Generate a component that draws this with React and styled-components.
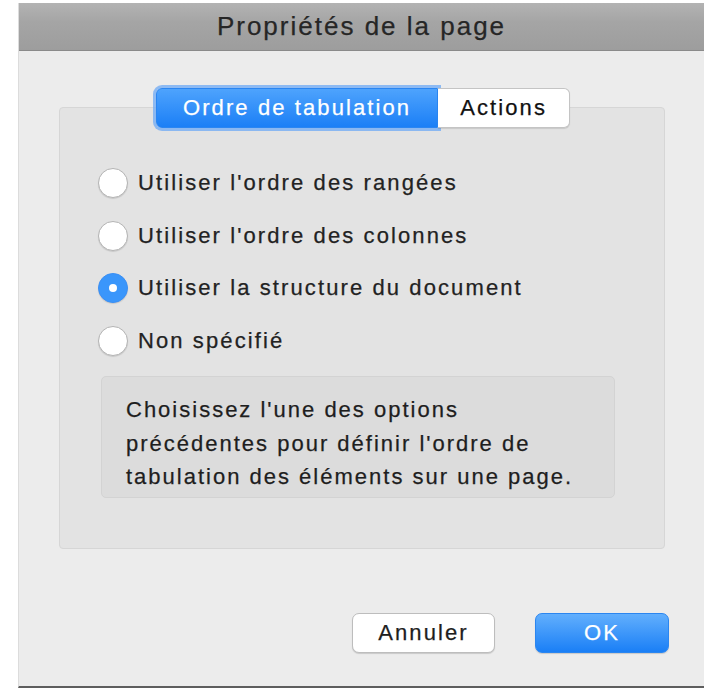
import React, { useState } from "react";
import styled, { createGlobalStyle } from "styled-components";

const Global = createGlobalStyle`
  html, body {
    margin: 0;
    padding: 0;
    background: #ffffff;
  }
  body {
    font-family: "Liberation Sans", Arial, sans-serif;
    -webkit-text-stroke: 0.25px currentColor;
  }
`;

const Page = styled.div`
  width: 710px;
  height: 695px;
  padding: 3px 6px 0 18px;
  box-sizing: border-box;
`;

const Window = styled.div`
  width: 686px;
  height: 685px;
  display: flex;
  flex-direction: column;
  background: #ececec;
  border-left: 1px solid #dcdcdc;
  border-bottom: 2px solid #5e5e5e;
  box-sizing: border-box;
`;

const TitleBar = styled.div`
  height: 47px;
  flex-shrink: 0;
  display: flex;
  align-items: center;
  justify-content: center;
  background: linear-gradient(#b3b3b3, #a5a5a5 40%, #9d9d9d);
  border-bottom: 1px solid #8a8a8a;
  color: #262626;
  font-size: 26px;
  letter-spacing: 2px;
`;

const Body = styled.div`
  flex: 1;
  display: flex;
  flex-direction: column;
  padding: 37px 39px 33px 40px;
`;

const Tabs = styled.div`
  display: flex;
  justify-content: center;
  margin-bottom: -21px;
  position: relative;
  z-index: 1;
  padding-left: 2px;
`;

const Tab = styled.div`
  height: 40px;
  display: flex;
  align-items: center;
  padding: 0 ${(p) => (p.$active ? "26px" : "22px")};
  font-size: 22px;
  letter-spacing: 2.1px;
  box-sizing: border-box;
  color: ${(p) => (p.$active ? "#ffffff" : "#111111")};
  background: ${(p) =>
    p.$active ? "linear-gradient(#4ea3fd, #1b7ff6)" : "#ffffff"};
  border: 1px solid ${(p) => (p.$active ? "#2a86f2" : "#c4c4c4")};
  border-radius: ${(p) => (p.$active ? "6px 0 0 6px" : "0 6px 6px 0")};
  box-shadow: ${(p) =>
    p.$active
      ? "0 0 0 3px rgba(110, 170, 245, 0.75)"
      : "0 1px 1px rgba(0,0,0,0.12)"};
  border-left: ${(p) => (p.$active ? "" : "none")};
`;

const Group = styled.div`
  background: #e3e3e3;
  border: 1px solid #d6d6d6;
  border-radius: 4px;
  padding: 49px 30px 50px 38px;
  display: flex;
  flex-direction: column;
`;

const Row = styled.label`
  height: 52.5px;
  display: flex;
  align-items: center;
  gap: 10px;
  font-size: 22px;
  letter-spacing: 2.1px;
  color: #222222;
  cursor: pointer;
  white-space: nowrap;
`;

const Radio = styled.span`
  width: 30px;
  height: 30px;
  flex-shrink: 0;
  border-radius: 50%;
  box-sizing: border-box;
  display: flex;
  align-items: center;
  justify-content: center;
  background: ${(p) => (p.$checked ? "#3a96fb" : "#ffffff")};
  border: 1px solid ${(p) => (p.$checked ? "#3a8ff5" : "#b4b4b4")};
  box-shadow: 0 1px 1px rgba(0, 0, 0, 0.12);

  &::after {
    content: "";
    display: ${(p) => (p.$checked ? "block" : "none")};
    width: 8px;
    height: 8px;
    border-radius: 50%;
    background: #ffffff;
  }
`;

const Info = styled.div`
  margin: 9px 0 0 3px;
  width: 514px;
  box-sizing: border-box;
  padding: 16px 10px 3px 24px;
  background: #dcdcdc;
  border: 1px solid #d3d3d3;
  border-radius: 5px;
  font-size: 22px;
  letter-spacing: 2px;
  line-height: 33.5px;
  color: #1e1e1e;
  white-space: nowrap;
`;

const Footer = styled.div`
  margin-top: auto;
  margin-right: -4px;
  display: flex;
  justify-content: flex-end;
  gap: 40px;
`;

const Button = styled.button`
  height: 40px;
  width: ${(p) => p.$w}px;
  font-family: inherit;
  font-size: 22px;
  letter-spacing: 2.1px;
  border-radius: 7px;
  cursor: pointer;
  color: ${(p) => (p.$primary ? "#ffffff" : "#1e1e1e")};
  background: ${(p) =>
    p.$primary ? "linear-gradient(#62affd, #1a7ff6)" : "#ffffff"};
  border: 1px solid ${(p) => (p.$primary ? "#2b86f0" : "#bdbdbd")};
  box-shadow: 0 1px 1px rgba(0, 0, 0, 0.15);
`;

const options = [
  "Utiliser l'ordre des rangées",
  "Utiliser l'ordre des colonnes",
  "Utiliser la structure du document",
  "Non spécifié",
];

export default function App() {
  const [choice, setChoice] = useState(2);
  const [tab, setTab] = useState(0);
  return (
    <Page>
      <Global />
      <Window>
        <TitleBar>Propriétés de la page</TitleBar>
        <Body>
          <Tabs>
            <Tab $active={tab === 0} onClick={() => setTab(0)}>
              Ordre de tabulation
            </Tab>
            <Tab $active={tab === 1} onClick={() => setTab(1)}>
              Actions
            </Tab>
          </Tabs>
          <Group>
            {options.map((o, i) => (
              <Row key={o} onClick={() => setChoice(i)}>
                <Radio $checked={choice === i} />
                {o}
              </Row>
            ))}
            <Info>
              Choisissez l'une des options
              <br />
              précédentes pour définir l'ordre de
              <br />
              tabulation des éléments sur une page.
            </Info>
          </Group>
          <Footer>
            <Button $w={143}>Annuler</Button>
            <Button $w={134} $primary>
              OK
            </Button>
          </Footer>
        </Body>
      </Window>
    </Page>
  );
}
